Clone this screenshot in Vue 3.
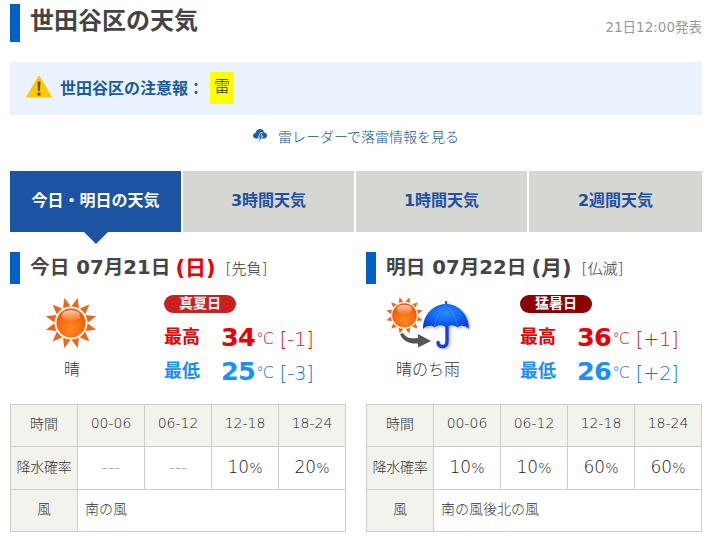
<script setup>
const tabs = ['今日・明日の天気', '3時間天気', '1時間天気', '2週間天気']
const days = [
  { label: '今日 07月21日', dow: '(日)', sunday: true, rokuyo: '[先負]', weather: '晴', rain: false, badge: '真夏日', badgeClass: 'b1',
    hi: '34', hiDiff: '[-1]', lo: '25', loDiff: '[-3]', probs: ['---', '---', '10', '20'], wind: '南の風' },
  { label: '明日 07月22日', dow: '(月)', sunday: false, rokuyo: '[仏滅]', weather: '晴のち雨', rain: true, badge: '猛暑日', badgeClass: 'b2',
    hi: '36', hiDiff: '[+1]', lo: '26', loDiff: '[+2]', probs: ['10', '10', '60', '60'], wind: '南の風後北の風' }
]
const times = ['00-06', '06-12', '12-18', '18-24']
const rays = Array.from({ length: 12 }, (_, i) => i * 30 + 15)
</script>

<template>
  <div class="page">
    <header class="head">
      <h1 class="title">世田谷区の天気</h1>
      <span class="pub">21日12:00発表</span>
    </header>

    <div class="alert">
      <svg class="warn" width="26" height="23" viewBox="0 0 26 23">
        <path d="M13 1 L25.500 22 H0.500 Z" fill="#ffc800" stroke="#ffc800" stroke-width="1" stroke-linejoin="round"/>
        <path d="M11.500 6.500 H14.500 L14 16 H12 Z" fill="#6b5200"/>
        <rect x="11.500" y="17.500" width="3" height="3" fill="#6b5200"/>
      </svg>
      <span class="alert-text">世田谷区の注意報：</span>
      <span class="alert-tag">雷</span>
    </div>

    <div class="link">
      <svg width="14" height="17" viewBox="0 0 14 17">
        <path d="M3.500 10.500 C1 10.500 0 9 0 7.500 C0 6 1.200 5 2.500 5 C3 2.500 5 1 7 1 C9.500 1 11 2.800 11 4.500 C12.800 4.500 14 5.800 14 7.500 C14 9.200 12.800 10.500 11 10.500 Z" fill="#1a5fa8"/>
        <path d="M7.500 4.500 L5 9.500 H7 L4.500 16 L10 8.200 H7.800 L9.300 4.500 Z" fill="#1a5fa8" stroke="#fff" stroke-width="0.600"/>
      </svg>
      <span>雷レーダーで落雷情報を見る</span>
    </div>

    <nav class="tabs">
      <div v-for="(t, i) in tabs" :key="t" class="tab" :class="{ active: i === 0 }">{{ t }}</div>
    </nav>

    <div class="cols">
      <section v-for="d in days" :key="d.label" class="col">
        <h2 class="date">
          <span>{{ d.label }}</span>
          <span class="dow" :class="{ sun: d.sunday }">{{ d.dow }}</span>
          <span class="rokuyo">{{ d.rokuyo }}</span>
        </h2>
        <div class="summary">
          <div class="wx">
            <svg v-if="!d.rain" class="sun-icon" width="54" height="54" viewBox="0 0 54 54">
              <defs>
                <radialGradient id="sunA" cx="50%" cy="70%" r="65%">
                  <stop offset="0" stop-color="#ff8c20"/>
                  <stop offset="0.650" stop-color="#f8680e"/>
                  <stop offset="1" stop-color="#e8500a"/>
                </radialGradient>
                <linearGradient id="glossA" x1="0" y1="0" x2="0" y2="1">
                  <stop offset="0" stop-color="#fff" stop-opacity="0.700"/>
                  <stop offset="1" stop-color="#fff" stop-opacity="0.050"/>
                </linearGradient>
              </defs>
              <g fill="#e8671c">
                <path v-for="r in rays" :key="r" d="M23 11 L27 1 L31 11 Z" :transform="`rotate(${r} 27 27)`"/>
              </g>
              <circle cx="27" cy="27" r="16.500" fill="#fdf3e4"/>
              <circle cx="27" cy="27" r="14.500" fill="url(#sunA)"/>
              <ellipse cx="27" cy="19.500" rx="9.500" ry="5.500" fill="url(#glossA)"/>
            </svg>
            <svg v-else width="86" height="54" viewBox="0 0 86 54">
              <defs>
                <radialGradient id="sunB" cx="50%" cy="70%" r="65%">
                  <stop offset="0" stop-color="#ff8c20"/>
                  <stop offset="0.650" stop-color="#f8680e"/>
                  <stop offset="1" stop-color="#e8500a"/>
                </radialGradient>
                <linearGradient id="glossB" x1="0" y1="0" x2="0" y2="1">
                  <stop offset="0" stop-color="#fff" stop-opacity="0.700"/>
                  <stop offset="1" stop-color="#fff" stop-opacity="0.050"/>
                </linearGradient>
                <radialGradient id="umb" cx="50%" cy="35%" r="65%">
                  <stop offset="0" stop-color="#2a8cff"/>
                  <stop offset="0.600" stop-color="#1062f0"/>
                  <stop offset="1" stop-color="#0a3fd0"/>
                </radialGradient>
                <filter id="shadow" x="-20%" y="-20%" width="150%" height="150%">
                  <feDropShadow dx="1.500" dy="1.500" stdDeviation="1.500" flood-color="#000" flood-opacity="0.280"/>
                </filter>
              </defs>
              <g transform="scale(0.720)">
                <g fill="#e8671c">
                  <path v-for="r in rays" :key="r" d="M22.500 11 L27 1 L31.500 11 Z" :transform="`rotate(${r} 27 27)`"/>
                </g>
                <circle cx="27" cy="27" r="19" fill="#fdf3e4"/>
                <circle cx="27" cy="27" r="17" fill="url(#sunB)"/>
                <ellipse cx="27" cy="18.500" rx="11" ry="6.500" fill="url(#glossB)"/>
              </g>
              <path d="M18 37 C21 42 26 43 33 42 V38 L46 45 L33 51.500 V47.500 C24 48 18 45 15 38 Z" fill="#555"/>
              <g filter="url(#shadow)">
                <path d="M61 9 V5" stroke="#1a55d8" stroke-width="2"/>
                <path d="M62 30 V46 C62 52 53 52 53 46.500" stroke="#1a3fd0" stroke-width="3.400" fill="none" stroke-linecap="round"/>
                <path d="M38 33 C38 18 49 8 61 8 C73 8 84 18 84 33 C80 29 75 29 72.500 31.500 C69 28.500 64.500 28.500 61 31.500 C57.500 28.500 53 28.500 49.500 31.500 C47 29 42 29 38 33 Z" fill="url(#umb)"/>
              </g>
              <path d="M61 9 C55 14 51 22 49.500 31 M61 9 C67 14 71 22 72.500 31" stroke="#4d93ff" stroke-width="1" fill="none" opacity="0.500"/>
            </svg>
            <p class="wx-name">{{ d.weather }}</p>
          </div>
          <div class="temps">
            <span class="badge" :class="d.badgeClass">{{ d.badge }}</span>
            <div class="temp hi">
              <b class="t-label">最高</b>
              <b class="t-val">{{ d.hi }}</b>
              <span class="t-unit">℃</span>
              <span class="t-diff">{{ d.hiDiff }}</span>
            </div>
            <div class="temp lo">
              <b class="t-label">最低</b>
              <b class="t-val">{{ d.lo }}</b>
              <span class="t-unit">℃</span>
              <span class="t-diff">{{ d.loDiff }}</span>
            </div>
          </div>
        </div>
        <table class="tbl">
          <tbody>
            <tr class="r1">
              <th>時間</th>
              <td v-for="t in times" :key="t" class="time">{{ t }}</td>
            </tr>
            <tr class="r2">
              <th class="narrow">降水確率</th>
              <td v-for="(p, i) in d.probs" :key="i" class="prob">
                <span v-if="p === '---'" class="none">---</span>
                <template v-else>{{ p }}<small>%</small></template>
              </td>
            </tr>
            <tr class="r3">
              <th>風</th>
              <td colspan="4" class="wind">{{ d.wind }}</td>
            </tr>
          </tbody>
        </table>
      </section>
    </div>
  </div>
</template>

<style>
html, body { margin: 0; background: #fff; }
</style>

<style scoped>
.page {
  width: 692px;
  padding: 4px 12px 0 10px;
  font-family: "DejaVu Sans", "Noto Sans CJK JP", sans-serif;
  color: #444;
}
.head { display: flex; justify-content: space-between; align-items: flex-start; height: 38px; }
.title {
  margin: 0;
  height: 38px;
  line-height: 34px;
  padding-left: 10px;
  border-left: 10px solid #0060c8;
  font-size: 24px;
  font-weight: 700;
  color: #444;
}
.pub { margin-top: 14px; font-size: 13.5px; line-height: 18px; color: #999; }
.alert {
  display: flex;
  align-items: center;
  height: 53px;
  margin-top: 20px;
  padding-left: 16px;
  padding-bottom: 2px;
  box-sizing: border-box;
  background: #eaf3fd;
}
.warn { margin-right: 8px; margin-bottom: 2px; }
.alert-text { font-size: 16px; font-weight: 700; color: #1a5a9e; margin-right: 4px; width: 146px; padding-bottom: 2px; }
.alert-tag {
  width: 24px;
  height: 32px;
  line-height: 30px;
  text-align: center;
  background: #ffff00;
  font-size: 16px;
  font-weight: 300;
  color: #333;
}
.link {
  display: flex;
  justify-content: center;
  align-items: center;
  gap: 11px;
  height: 20px;
  margin-top: 11px;
  font-size: 14px;
  font-weight: 300;
  color: #0c55a4;
}
.tabs { display: flex; gap: 2px; margin-top: 25px; }
.tab {
  flex: 0 0 171px;
  height: 61px;
  line-height: 59px;
  text-align: center;
  background: #d6d6d2;
  color: #1e52a0;
  font-size: 16px;
  font-weight: 700;
  position: relative;
}
.tab:last-child { flex: 1 1 0; }
.tab.active { background: #1c53a3; color: #fff; }
.tab.active::after {
  content: "";
  position: absolute;
  left: 74px;
  top: 61px;
  border-left: 12px solid transparent;
  border-right: 12px solid transparent;
  border-top: 12px solid #1c53a3;
}
.cols { display: flex; gap: 20px; margin-top: 20px; }
.col { width: 336px; }
.date {
  display: flex;
  align-items: center;
  margin: 0;
  height: 32px;
  padding-left: 10px;
  border-left: 10px solid #0060c8;
  font-size: 19.7px;
  font-weight: 700;
  line-height: 30px;
  color: #444;
}
.dow { margin-left: 5px; font-size: 21px; }
.dow.sun { color: #e60000; }
.rokuyo { margin-left: 10px; font-size: 15px; font-weight: 300; color: #333; padding-top: 1px; }
.summary { display: flex; height: 120px; }
.wx { width: 124px; display: flex; flex-direction: column; align-items: center; padding-top: 12px; }
.sun-icon { margin-right: 2px; }
.wx-name { margin: 10px 0 0; font-size: 16px; font-weight: 300; line-height: 20px; color: #333; }
.wx svg { display: block; }
.temps { padding: 11px 0 0 30px; flex: 1; }
.badge {
  display: block;
  width: 72px;
  height: 18px;
  line-height: 17px;
  border-radius: 9px;
  text-align: center;
  color: #fff;
  font-size: 14px;
  font-weight: 700;
}
.b1 { background: #cc2020; }
.b2 { background: #8b0000; }
.temp { display: flex; align-items: center; height: 34px; line-height: 34px; white-space: nowrap; }
.temp.hi { margin-top: 7px; color: #e60000; }
.temp.lo { color: #1a90ff; }
.temp.hi .t-diff { color: #cc1a08; }
.temp.lo .t-diff { color: #0c74d4; }
.temp.hi .t-unit { color: #cc1a08; }
.temp.lo .t-unit { color: #0c74d4; }
.t-label { width: 57px; font-size: 18px; padding-bottom: 1px; }
.t-val { font-size: 25.5px; letter-spacing: -0.800px; padding-bottom: 1px; }
.t-unit { font-size: 16px; font-weight: 300; padding-top: 3px; margin-left: 1px; }
.t-diff { margin-left: 6px; font-size: 19px; font-weight: 300; padding-top: 3px; }
.tbl {
  width: 336px;
  table-layout: fixed;
  border-collapse: collapse;
  font-size: 14px;
  color: #333;
}
.tbl th, .tbl td { border: 1px solid #ccc; padding: 0 0 5px; text-align: center; font-weight: 300; }
.tbl th { width: 66px; background: #f3f3ee; }
.tbl .time { background: #f3f3ee; color: #222; }
.r1 { height: 42px; }
.r2 { height: 43px; }
.r3 { height: 42px; }
.tbl .narrow { font-size: 14px; white-space: nowrap; letter-spacing: -0.200px; }
.tbl .prob { font-size: 17px; padding-bottom: 3px; color: #222; }
.prob small { font-size: 14px; }
.none { color: #999; font-size: 17px; }
.tbl .wind { text-align: left; padding-left: 7px; font-size: 14px; }
</style>
